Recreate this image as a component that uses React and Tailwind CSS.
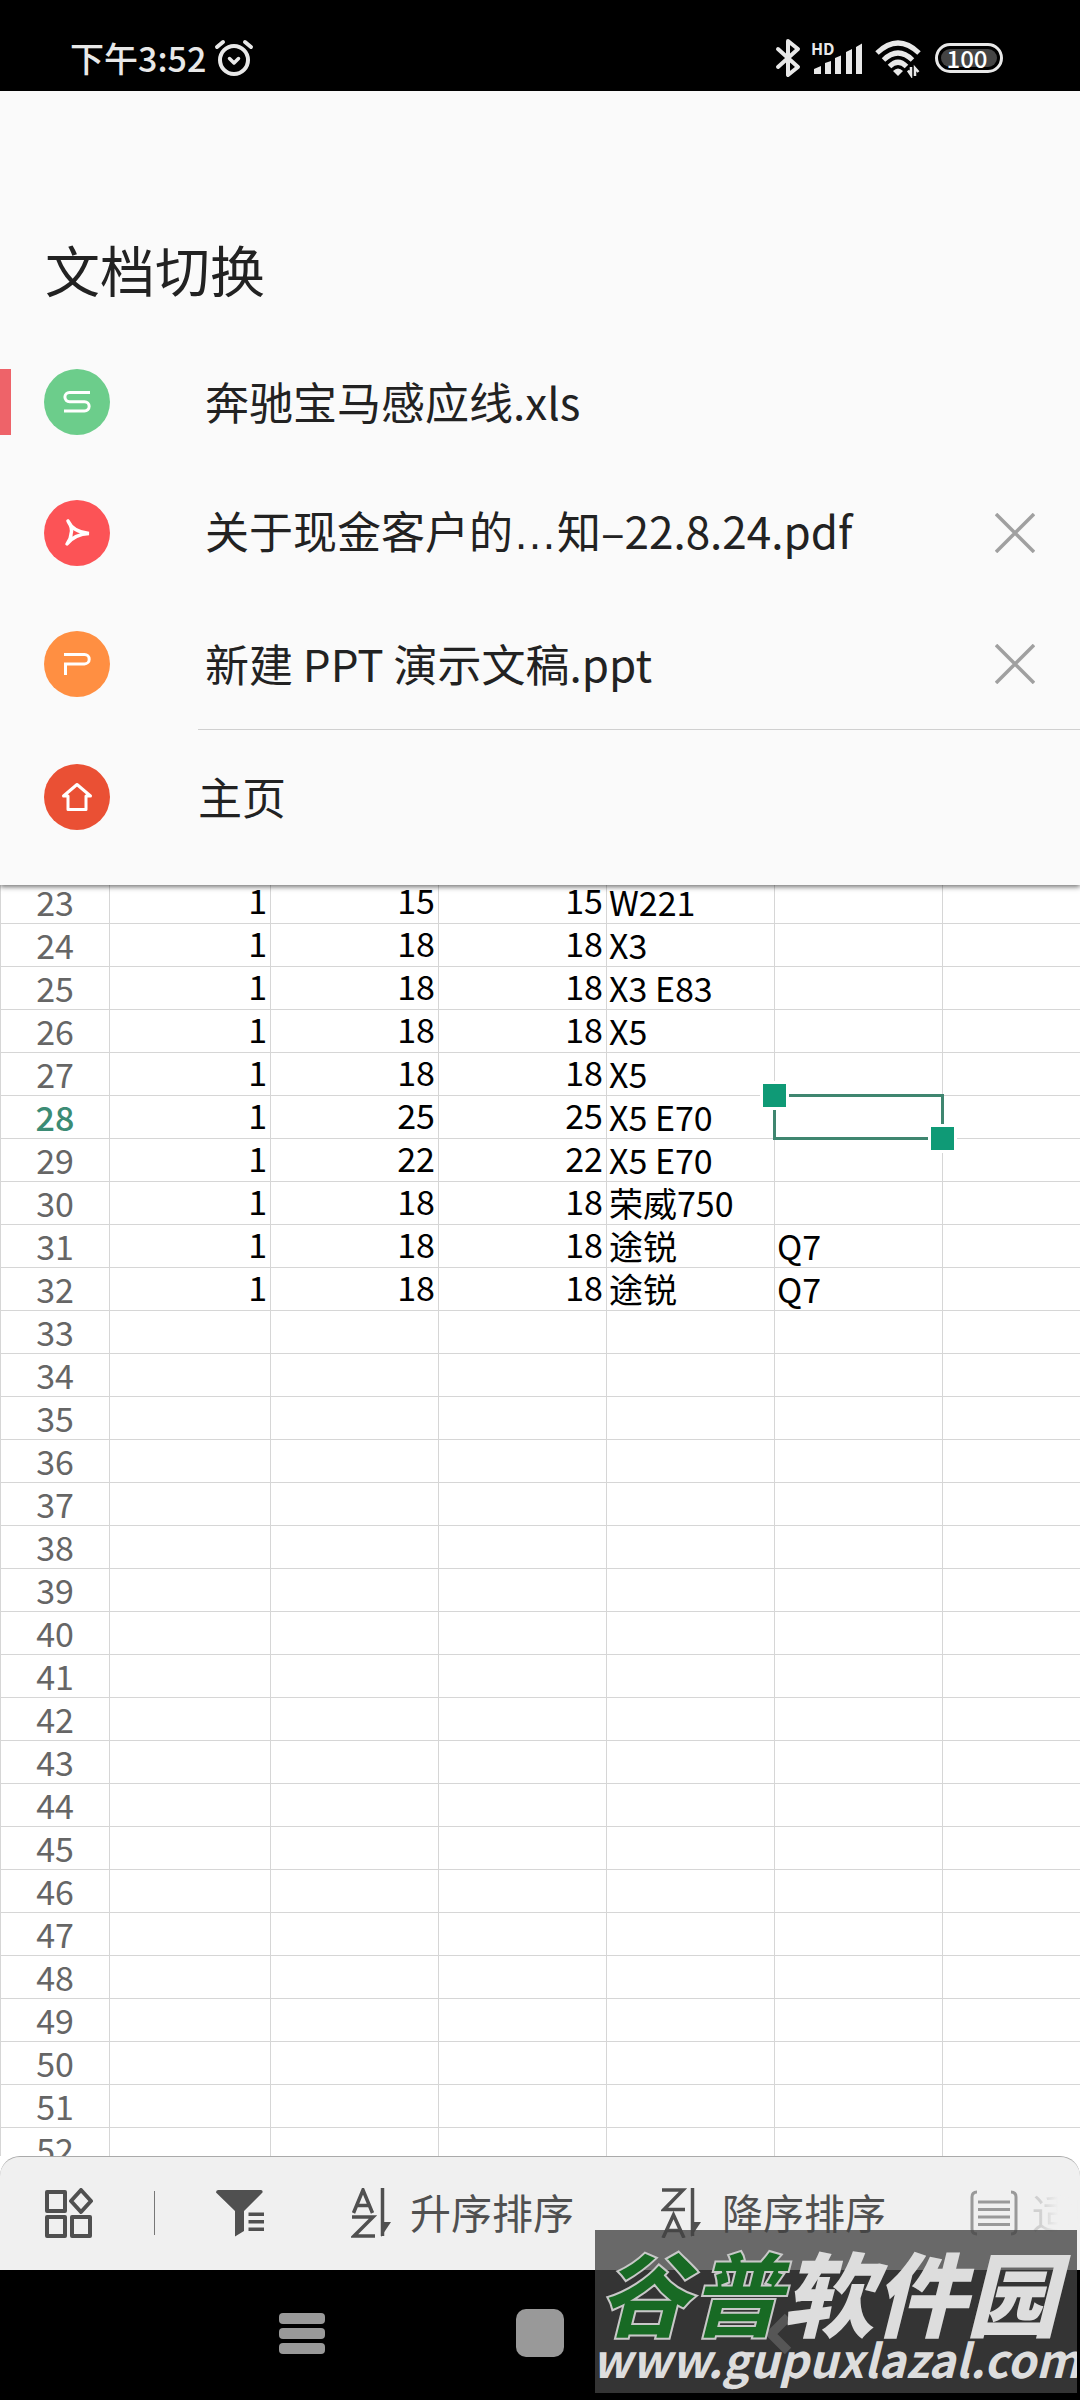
import React, { useState } from 'react';

const documents = [
  { id: 'xls', type: 'sheet', before: '奔驰宝马感应线.xls' },
  { id: 'pdf', type: 'pdf', before: '关于现金客户的', after: '知–22.8.24.pdf' },
  { id: 'ppt', type: 'slides', before: '新建 PPT 演示文稿.ppt' }
];

const badgeColors = {
  sheet: 'bg-[#6ccd8b]',
  pdf: 'bg-[#fc5356]',
  slides: 'bg-[#ff8f42]',
  home: 'bg-[#ea5034]'
};

const sheetData = {
  23: ['1', '15', '15', 'W221', ''],
  24: ['1', '18', '18', 'X3', ''],
  25: ['1', '18', '18', 'X3 E83', ''],
  26: ['1', '18', '18', 'X5', ''],
  27: ['1', '18', '18', 'X5', ''],
  28: ['1', '25', '25', 'X5 E70', ''],
  29: ['1', '22', '22', 'X5 E70', ''],
  30: ['1', '18', '18', '荣威750', ''],
  31: ['1', '18', '18', '途锐', 'Q7'],
  32: ['1', '18', '18', '途锐', 'Q7']
};

const emptyRow = ['', '', '', '', ''];
const rowNumbers = Array.from({ length: 30 }, (_, i) => i + 23);

const StatusBar = () => (
  <header className="flex h-[91px] shrink-0 items-center justify-between bg-black pl-[70px] pr-[77px] pt-[28px] pb-[4px] text-[#e8e8e8]">
    <div className="flex items-center gap-2">
      <span className="text-[34px] leading-[48px] font-medium">下午3:52</span>
      <svg className="h-10 w-10" viewBox="0 0 40 40" fill="none" stroke="currentColor" strokeWidth="4" strokeLinecap="round">
        <circle cx="20" cy="22" r="14" />
        <path d="M3 9 9 4M37 9 31 4" />
        <path d="M15.500 20.500 20 25l4.500-4.500" strokeWidth="3.500" strokeLinejoin="round" />
      </svg>
    </div>
    <div className="flex items-center">
      <svg className="h-10 w-[26px]" viewBox="0 0 26 40" fill="none" stroke="currentColor" strokeWidth="4" strokeLinecap="round" strokeLinejoin="round">
        <path d="M3 11 23 29 13 37V3L23 11 3 29" />
      </svg>
      <div className="relative ml-[10px] h-10 w-[52px]">
        <span className="absolute top-0 left-0 text-[16px] leading-[20px] font-bold">HD</span>
        <svg className="h-10 w-[52px]" viewBox="0 0 52 40" fill="currentColor">
          <path d="M3 36V31l7-3v8zM14 36V25l6-2v13zM24 36V20l6-2.500V36zM35 36V14l6-3v25zM45 36V9l6-3.500V36z" />
        </svg>
      </div>
      <svg className="ml-[12px] h-10 w-[46px]" viewBox="0 0 46 40" fill="none" stroke="currentColor" strokeWidth="5">
        <path d="M2 15Q23-5 44 15" />
        <path d="M8.500 22Q23 8 37.500 22" />
        <path d="M14.500 28.500Q23 20 31.500 28.500" />
        <path d="M18 33q5-5 10 0l-5 5z" fill="currentColor" stroke="none" />
        <path d="M33 32.500 36 37V29M40 38V30l3.500 4" strokeWidth="2.500" />
      </svg>
      <div className="ml-[14px] flex h-[30px] w-[68px] rounded-full border-[3px] border-current p-[3px]">
        <span className="flex w-full items-center justify-center rounded-full bg-[#444] pr-1 text-[24px] leading-[18px] font-medium text-white">100</span>
      </div>
    </div>
  </header>
);

const BadgeGlyph = ({ type }) => (
  <svg className="h-9 w-9" viewBox="0 0 36 36" fill="none" stroke="#fff" strokeWidth="3">
    {type === 'sheet' && <path d="M31 8.500H10.500a4.600 4.600 0 0 0 0 9.200h15a4.600 4.600 0 0 1 0 9.300H5" />}
    {type === 'slides' && <path d="M5 8.500h20.500a4.700 4.700 0 0 1 0 9.400H6.500V29" />}
    {type === 'pdf' && (
      <path d="M9 6Q14 13 12 19 12 24 8 29M9 6Q14 17 30 18.500 16 19 8 29" strokeWidth="3.500" strokeLinecap="round" />
    )}
    {type === 'home' && <path d="M18 5.500 4.500 17H9v13.500h18V17h4.500z" strokeLinejoin="round" />}
  </svg>
);

const Badge = ({ type }) => (
  <span className={`flex h-[66px] w-[66px] shrink-0 items-center justify-center rounded-full ${badgeColors[type]}`}>
    <BadgeGlyph type={type} />
  </span>
);

const DocumentSwitcher = ({ activeId, openDocs, onSelect, onClose }) => (
  <section className="relative z-10 shrink-0 bg-[#fafafa] pb-[22px] text-[#222] shadow-[0_2px_5px_rgba(0,0,0,0.55)]">
    <h1 className="px-[45px] pt-[137px] pb-[28px] text-[55px] leading-[80px]">文档切换</h1>
    <ul>
      {openDocs.map((doc) => {
        const active = doc.id === activeId;
        return (
          <li key={doc.id} className="flex h-[131px] items-center">
            <span className={`h-[66px] w-[11px] ${active ? 'bg-[#ee6369]' : ''}`} />
            <button type="button" onClick={() => onSelect(doc.id)} className="flex flex-1 items-center gap-[95px] pl-[33px] text-left text-[44px] leading-[64px]">
              <Badge type={doc.type} />
              <span className="pb-[2px]">
                {doc.before}
                {doc.after && <span className="font-['Liberation_Sans',sans-serif]">…</span>}
                {doc.after}
              </span>
            </button>
            {!active && (
              <button type="button" aria-label="关闭" onClick={() => onClose(doc.id)} className="mr-[45px]">
                <svg className="h-10 w-10" viewBox="0 0 40 40" stroke="#a0a0a0" strokeWidth="3.500">
                  <path d="M1 1 39 39M39 1 1 39" />
                </svg>
              </button>
            )}
          </li>
        );
      })}
    </ul>
    <hr className="ml-[198px] border-[#d0d0d0]" />
    <button type="button" className="flex h-[133px] w-full items-center gap-[88px] pl-[44px] text-left text-[44px] leading-[64px]">
      <Badge type="home" />
      <span className="pb-[2px]">主页</span>
    </button>
  </section>
);

const SelectionFrame = () => (
  <span className="absolute -inset-[2px] border-[3px] border-[#3f8670]">
    <span className="absolute -top-[16px] -left-[16px] h-[29px] w-[29px] border-[3px] border-white bg-[#0f9a76]" />
    <span className="absolute -right-[16px] -bottom-[16px] h-[29px] w-[29px] border-[3px] border-white bg-[#0f9a76]" />
  </span>
);

const Spreadsheet = ({ selectedRow }) => (
  <main className="-mt-1 min-h-0 flex-1 overflow-hidden bg-white">
    <table className="w-full table-fixed border-separate border-spacing-0 text-[34px] leading-[42px] text-black">
      <colgroup>
        <col className="w-[110px]" />
        <col className="w-[161px]" />
        <col className="w-[168px]" />
        <col className="w-[168px]" />
        <col className="w-[168px]" />
        <col className="w-[168px]" />
        <col />
      </colgroup>
      <tbody>
        {rowNumbers.map((row) => (
          <tr key={row} className="h-[43px]">
            <th
              scope="row"
              className={`border-r border-b border-l border-[#d6d6d6] p-0 ${row === selectedRow ? 'font-medium text-[#3c8c75]' : 'font-normal text-[#666]'}`}
            >
              {row}
            </th>
            {(sheetData[row] || emptyRow).map((value, i) => {
              const selected = row === selectedRow && i === 4;
              return (
                <td
                  key={i}
                  className={`border-r border-b border-[#d6d6d6] p-0 ${i < 3 ? 'pr-[3px] pb-1 text-right leading-[38px]' : 'pl-[2px]'} ${selected ? 'relative' : ''}`}
                >
                  {value}
                  {selected && <SelectionFrame />}
                </td>
              );
            })}
            <td className="border-b border-[#d6d6d6] p-0" />
          </tr>
        ))}
      </tbody>
    </table>
  </main>
);

const SortIcon = ({ descending }) => (
  <svg className="h-[50px] w-[41px]" viewBox="0 0 41 50" fill="none" stroke="currentColor" strokeWidth="3.500">
    {descending ? (
      <>
        <path d="M1 2H22L3 21.500H24" />
        <path d="M2 50 12.500 27 23 50M5.500 42.500H19.500" />
      </>
    ) : (
      <>
        <path d="M2.500 25 12 2 21.500 25M5.500 17.500H18.500" />
        <path d="M1 29H22L3 48H24" />
      </>
    )}
    <path d="M31.500 0V48" />
    <path d="M30 49V34h10z" fill="currentColor" stroke="none" />
  </svg>
);

const Toolbar = () => (
  <nav className="relative flex h-[114px] shrink-0 items-center overflow-hidden rounded-t-[20px] border-t border-[#aaa] bg-[#f0f0f0] pb-[2px] pl-[44px] text-[41px] leading-[60px] whitespace-nowrap text-[#505050]">
    <button type="button" aria-label="工具" className="shrink-0">
      <svg className="h-[50px] w-[50px]" viewBox="0 0 50 50" fill="none" stroke="currentColor" strokeWidth="4" strokeLinejoin="round">
        <path d="M3 4h18v19H3zM3 29h18v19H3zM28 29h18v19H28zM37 2 47 13 37 24 27 13z" />
      </svg>
    </button>
    <span className="ml-[60px] h-[44px] w-px shrink-0 bg-[#777]" />
    <button type="button" aria-label="筛选" className="ml-[61px] shrink-0">
      <svg className="h-[50px] w-[48px]" viewBox="0 0 48 50" fill="currentColor">
        <path d="M0 4.500Q0 2 2 2H45Q47 2 46.500 4.500L28 23V43L19 48.500V23z" />
        <path d="M32.500 24.500H48v3.500H32.500zM32.500 32H48v3.500H32.500zM32.500 39.500H48V43H32.500z" />
      </svg>
    </button>
    <button type="button" className="ml-[87px] flex shrink-0 items-center gap-[18px]">
      <SortIcon />
      <span className="pb-1">升序排序</span>
    </button>
    <button type="button" className="ml-[87px] flex shrink-0 items-center gap-[20px]">
      <SortIcon descending />
      <span className="pb-1">降序排序</span>
    </button>
    <button type="button" className="ml-[84px] flex shrink-0 items-center gap-[14px]">
      <svg className="h-[46px] w-[48px] text-[#999]" viewBox="0 0 48 46" fill="none" stroke="currentColor" strokeWidth="3">
        <path d="M7 2Q2 2 2 7V39Q2 44 7 44M41 2Q46 2 46 7V39Q46 44 41 44" />
        <path d="M8 12H40M8 19.500H40M8 27H40M8 34.500H40" />
      </svg>
      <span className="bg-linear-to-r from-[#d0d0d0] from-5% to-[#f0f0f0] to-16% bg-clip-text pb-1 text-transparent">适应屏幕</span>
    </button>
  </nav>
);

const Watermark = () => (
  <aside className="absolute right-[3px] bottom-[7px] flex h-[163px] w-[482px] flex-col items-center overflow-hidden bg-[#424242]/78 font-bold whitespace-nowrap text-[#ddd] italic">
    <p className="pt-[14px] pr-[16px] text-[92px] leading-[92px] font-black">
      <span className="text-[#186a24] [-webkit-text-stroke:2px_#c8c8c8]">谷普</span>
      软件园
    </p>
    <p className="text-[46px] leading-[44px]">www.gupuxlazal.com</p>
  </aside>
);

const SystemNav = () => (
  <footer className="relative flex h-[130px] shrink-0 items-center justify-center bg-black px-[17%] pb-1 text-[#999]">
    <button type="button" aria-label="最近任务" className="flex flex-1 justify-center">
      <svg className="h-[48px] w-[48px]" viewBox="0 0 48 48" fill="currentColor">
        <rect x="1" y="4" width="46" height="11" rx="4" />
        <rect x="1" y="19" width="46" height="11" rx="4" />
        <rect x="1" y="34" width="46" height="11" rx="4" />
      </svg>
    </button>
    <button type="button" aria-label="主屏幕" className="flex flex-1 justify-center">
      <span className="h-[48px] w-[48px] rounded-[10px] bg-current" />
    </button>
    <button type="button" aria-label="返回" className="flex flex-1 justify-center">
      <svg className="h-[48px] w-[48px]" viewBox="0 0 48 48" fill="none" stroke="currentColor" strokeWidth="9" strokeLinejoin="round">
        <path d="M34 8 17 25 34 42" />
      </svg>
    </button>
    <Watermark />
  </footer>
);

const App = () => {
  const [activeId, setActiveId] = useState('xls');
  const [openDocs, setOpenDocs] = useState(documents);

  // Remove the document from the list
  const handleClose = (id) => {
    setOpenDocs(openDocs.filter((doc) => doc.id !== id));
  };

  return (
    <div className="flex h-screen flex-col overflow-hidden bg-white font-['Noto_Sans_CJK_SC',sans-serif]">
      <StatusBar />
      <DocumentSwitcher activeId={activeId} openDocs={openDocs} onSelect={setActiveId} onClose={handleClose} />
      <Spreadsheet selectedRow={28} />
      <Toolbar />
      <SystemNav />
    </div>
  );
};

export default App;
